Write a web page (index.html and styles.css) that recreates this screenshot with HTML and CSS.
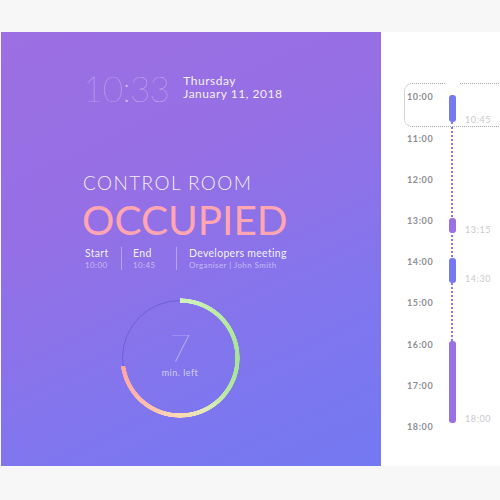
FILE: index.html
```html
<!DOCTYPE html>
<html>
<head>
<meta charset="utf-8">
<link rel="stylesheet" href="styles.css">
</head>
<body>
<div class="screen">
  <div class="main">
    <div class="clock-row">
      <div class="clock">10:33</div>
      <div class="date">
        <div>Thursday</div>
        <div>January 11, 2018</div>
      </div>
    </div>
    <div class="room">CONTROL ROOM</div>
    <div class="status">OCCUPIED</div>
    <div class="info">
      <div class="col col-start">
        <div class="label">Start</div>
        <div class="sub">10:00</div>
      </div>
      <div class="col col-end">
        <div class="label">End</div>
        <div class="sub">10:45</div>
      </div>
      <div class="col col-meet">
        <div class="label">Developers meeting</div>
        <div class="sub">Organiser | John Smith</div>
      </div>
    </div>
    <div class="ring-wrap">
      <div class="ring-track"></div>
      <div class="ring-arc"></div>
      <div class="ring-text">
        <div class="mins">7</div>
        <div class="left">min. left</div>
      </div>
    </div>
  </div>
  <div class="side">
    <div class="hours">
      <div class="hour">10:00</div>
      <div class="hour">11:00</div>
      <div class="hour">12:00</div>
      <div class="hour">13:00</div>
      <div class="hour">14:00</div>
      <div class="hour">15:00</div>
      <div class="hour">16:00</div>
      <div class="hour">17:00</div>
      <div class="hour">18:00</div>
    </div>
    <div class="now-box"></div>
    <div class="now-gap"></div>
    <div class="track"></div>
    <div class="bar blue" style="top:63px;height:27px"></div>
    <div class="bar purple" style="top:186px;height:15px"></div>
    <div class="bar blue" style="top:226px;height:25px"></div>
    <div class="bar purple" style="top:309px;height:82px"></div>
    <div class="end" style="top:83px">10:45</div>
    <div class="end" style="top:193px">13:15</div>
    <div class="end" style="top:242px">14:30</div>
    <div class="end" style="top:382px">18:00</div>
  </div>
</div>
</body>
</html>
```

FILE: styles.css
```css
html, body {
  margin: 0;
  padding: 0;
}
body {
  background: #f7f7f7;
  font-family: Lato, "Open Sans", sans-serif;
  width: 500px;
  height: 500px;
  overflow: hidden;
}
.screen {
  margin-top: 32px;
  height: 434px;
  display: flex;
}
.main {
  margin-left: 1px;
  width: 380px;
  height: 100%;
  background: linear-gradient(155deg, #9c6fe2 0%, #966fe5 35%, #8076ee 72%, #7379f2 100%);
  box-sizing: border-box;
  padding: 37px 0 0 82px;
  color: #fff;
}
.clock-row {
  display: flex;
  align-items: center;
}
.clock {
  font-size: 35px;
  font-weight: 100;
  line-height: 38px;
  letter-spacing: -0.6px;
  color: rgba(255, 255, 255, 0.55);
}
.date {
  margin-left: 14px;
  font-size: 12px;
  line-height: 13px;
  letter-spacing: 0.5px;
  color: rgba(255, 255, 255, 0.92);
  margin-top: -2px;
}
.room {
  margin-top: 65px;
  font-size: 19px;
  font-weight: 300;
  letter-spacing: 1.4px;
  line-height: 22px;
  color: rgba(255, 255, 255, 0.9);
}
.status {
  margin-top: 6px;
  font-size: 40.5px;
  line-height: 40px;
  color: #ffa6b2;
  margin-left: -1px;
}
.info {
  margin-top: 7px;
  display: flex;
  margin-left: 2px;
}
.col {
  display: flex;
  flex-direction: column;
}
.col-start {
  width: 36px;
}
.col-end {
  width: 43px;
  padding-left: 11px;
  border-left: 1px solid rgba(255, 255, 255, 0.35);
}
.col-meet {
  padding-left: 12px;
  border-left: 1px solid rgba(255, 255, 255, 0.35);
}
.label {
  font-size: 10.5px;
  line-height: 13px;
  letter-spacing: 0.3px;
  color: rgba(255, 255, 255, 0.92);
}
.sub {
  font-size: 8px;
  line-height: 10px;
  letter-spacing: 0.4px;
  color: rgba(255, 255, 255, 0.5);
}
.ring-wrap {
  position: relative;
  width: 120px;
  height: 120px;
  margin-top: 28px;
  margin-left: 37px;
}
.ring-track {
  position: absolute;
  inset: 2px;
  border-radius: 50%;
  border: 1px solid rgba(80, 70, 190, 0.45);
}
.ring-arc {
  position: absolute;
  inset: 0;
  border-radius: 50%;
  background: conic-gradient(from 0deg, #d4f1c2 0deg, #bdeba6 40deg, #a4e593 90deg, #b6e8a0 125deg, #e4eab8 155deg, #fdd6b2 185deg, #ffbcab 220deg, #ffa3a8 262deg, transparent 262deg);
  -webkit-mask: radial-gradient(circle, transparent 55px, #000 55.5px, #000 59.5px, transparent 60px);
  mask: radial-gradient(circle, transparent 55px, #000 55.5px, #000 59.5px, transparent 60px);
}
.ring-text {
  position: absolute;
  inset: 0;
  display: flex;
  flex-direction: column;
  align-items: center;
  justify-content: center;
}
.mins {
  font-size: 38px;
  font-weight: 100;
  line-height: 32px;
  color: rgba(255, 255, 255, 0.65);
  margin-top: -8px;
}
.left {
  font-size: 9px;
  line-height: 11px;
  letter-spacing: 0.5px;
  color: rgba(255, 255, 255, 0.65);
  margin-top: 4px;
}
.side {
  flex: 1;
  background: #fff;
  position: relative;
  overflow: hidden;
}
.hours {
  padding-top: 44.4px;
  padding-left: 26px;
  display: flex;
  flex-direction: column;
}
.hour {
  height: 41.2px;
  line-height: 41.2px;
  font-size: 9px;
  font-weight: 700;
  letter-spacing: 0.6px;
  color: #8e8e93;
}
.now-box {
  position: absolute;
  left: 23px;
  top: 51px;
  width: 120px;
  height: 44px;
  box-sizing: border-box;
  border: 1.5px dotted #a8a8ad;
  border-radius: 8px;
}
.now-gap {
  position: absolute;
  left: 64px;
  top: 48px;
  width: 15px;
  height: 6px;
  background: #fff;
}
.track {
  position: absolute;
  left: 70px;
  top: 90px;
  height: 219px;
  border-left: 2px dotted #8877e6;
}
.bar {
  position: absolute;
  left: 68px;
  width: 7px;
  border-radius: 3px;
}
.bar.blue {
  background: #7779f0;
}
.bar.purple {
  background: #9a70e2;
}
.end {
  position: absolute;
  left: 84px;
  font-size: 9px;
  line-height: 10px;
  letter-spacing: 0.6px;
  color: #c9c9cc;
}
```
